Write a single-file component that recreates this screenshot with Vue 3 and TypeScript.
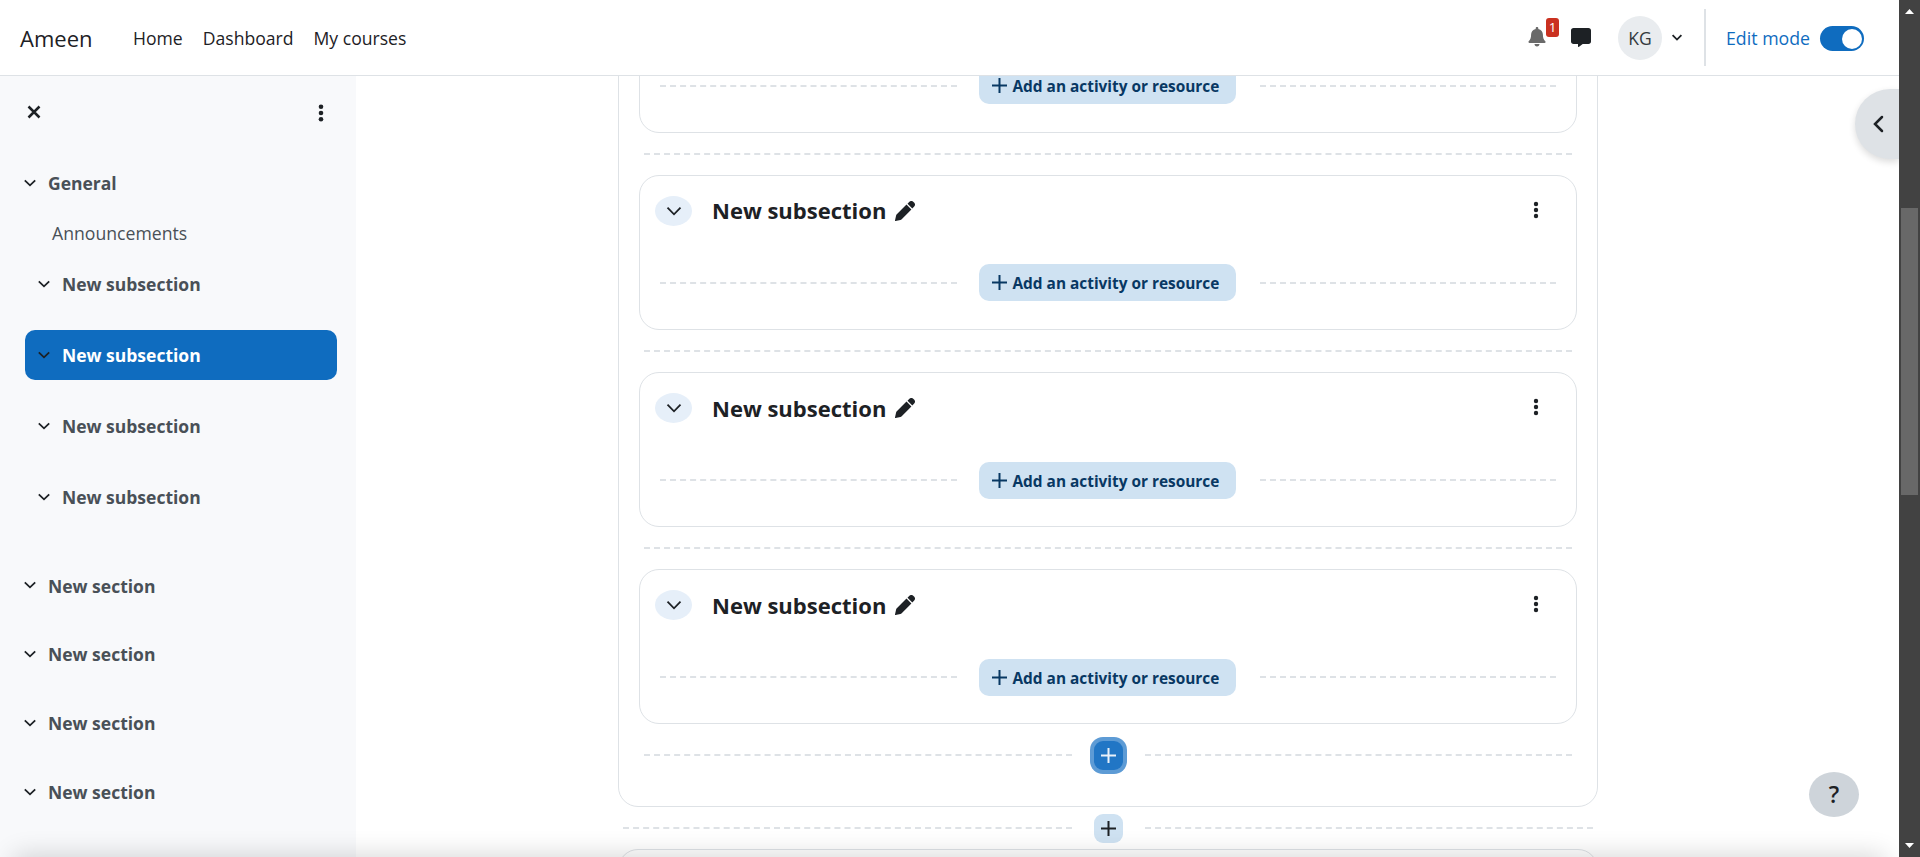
<script setup lang="ts">
interface IndexItem {
  label: string
  kind: 'section' | 'activity' | 'subsection'
  active?: boolean
}

interface Card {
  id: number
  title?: string
}

const navLinks = ['Home', 'Dashboard', 'My courses']
const general: IndexItem[] = [
  { label: 'General', kind: 'section' },
  { label: 'Announcements', kind: 'activity' },
]
const subsections: IndexItem[] = [
  { label: 'New subsection', kind: 'subsection' },
  { label: 'New subsection', kind: 'subsection', active: true },
  { label: 'New subsection', kind: 'subsection' },
  { label: 'New subsection', kind: 'subsection' },
]
const sections = ['New section', 'New section', 'New section', 'New section']
// The first card is scrolled under the navbar, so only its lower part is rendered.
const cards: Card[] = [
  { id: 1 },
  { id: 2, title: 'New subsection' },
  { id: 3, title: 'New subsection' },
  { id: 4, title: 'New subsection' },
]
</script>

<template>
  <div class="page">
    <div class="window">
      <header class="navbar">
        <span class="brand t">Ameen</span>
        <nav class="links">
          <a v-for="link in navLinks" :key="link" class="link t">{{ link }}</a>
        </nav>
        <div class="tools">
          <span class="bell">
            <svg width="18" height="20" viewBox="0 0 18 20"><path fill="#6a6a6a" d="M9 0c.8 0 1.300.5 1.300 1.200v.7c2.900.6 4.600 2.800 4.600 5.700 0 3.300.7 5.100 2.400 6.700.3.300.3.500.3.800 0 .5-.4.900-1 .9H1.400c-.6 0-1-.4-1-.9 0-.3 0-.5.3-.8 1.700-1.600 2.400-3.400 2.400-6.700 0-2.900 1.700-5.100 4.600-5.700v-.7C7.700.5 8.200 0 9 0zM6.500 17h5c0 1.400-1 2.400-2.500 2.400S6.500 18.400 6.500 17z"/></svg>
            <span class="badge">1</span>
          </span>
          <svg class="chat" width="20" height="20" viewBox="0 0 20 20"><path fill="#1d2125" d="M2.600 0h14.800C19 0 20 1 20 2.500v11c0 1.500-1 2.500-2.600 2.500h-5.700l-4 3c-.3.200-.7 0-.7-.4V16H2.600C1 16 0 15 0 13.500v-11C0 1 1 0 2.600 0z"/></svg>
          <span class="avatar"><span class="t">KG</span></span>
          <svg class="caret" width="12" height="8" viewBox="0 0 12 8"><path d="M1.600 1.200 6 5.600l4.400-4.400" /></svg>
          <span class="rule"></span>
          <span class="edit t">Edit mode</span>
          <span class="toggle"><span class="knob"></span></span>
        </div>
      </header>

      <div class="body">
        <aside class="index">
          <div class="index-head">
            <svg width="14" height="14" viewBox="0 0 14 14"><path class="cross" d="M1.500 1.500l11 11M12.500 1.500l-11 11" /></svg>
            <svg class="dots" width="6" height="18" viewBox="0 0 6 18"><circle cx="3" cy="2.800" r="2.300" /><circle cx="3" cy="9" r="2.300" /><circle cx="3" cy="15.200" r="2.300" /></svg>
          </div>
          <div v-for="item in general" :key="item.label" class="row" :class="item.kind">
            <svg v-if="item.kind === 'section'" class="caret" width="12" height="8" viewBox="0 0 12 8"><path d="M.8 1.300 6 6.300l5.200-5" /></svg>
            <span class="t">{{ item.label }}</span>
          </div>
          <div class="subs">
            <div v-for="(item, i) in subsections" :key="i" class="row subsection" :class="{ active: item.active }">
              <svg class="caret" width="12" height="8" viewBox="0 0 12 8"><path d="M.8 1.300 6 6.300l5.200-5" /></svg>
              <span class="t">{{ item.label }}</span>
            </div>
          </div>
          <div class="secs">
            <div v-for="(label, i) in sections" :key="i" class="row section">
              <svg class="caret" width="12" height="8" viewBox="0 0 12 8"><path d="M.8 1.300 6 6.300l5.200-5" /></svg>
              <span class="t">{{ label }}</span>
            </div>
          </div>
        </aside>

        <main class="content">
          <section class="outer">
            <template v-for="(card, i) in cards" :key="card.id">
              <div v-if="i > 0" class="between"><span class="dash"></span></div>
              <article class="card" :class="{ low: i > 1 }">
                <div v-if="card.title" class="card-head">
                  <span class="collapse">
                    <svg class="caret" width="16" height="12" viewBox="0 0 16 12"><path d="M1.500 2.700 8 9.300l6.500-6.600" /></svg>
                  </span>
                  <h3 class="t">{{ card.title }}</h3>
                  <svg class="pencil" width="20" height="20" viewBox="0 0 20 20"><path fill="#1d2125" d="M11.500 3.600 16.400 8.500 6.700 18.200c-.4.400-.8.500-1.300.700L.6 20c-.4.100-.7-.200-.6-.6l1.100-4.800c.2-.5.300-.9.700-1.300zM12.500 2.700 14.400.8c1.100-1.100 2.800-1.100 3.800-.1l1.100 1.100c1 1 1 2.700-.1 3.800L17.300 7.500z"/></svg>
                  <svg class="dots" width="6" height="18" viewBox="0 0 6 18"><circle cx="3" cy="3" r="2.200" /><circle cx="3" cy="9" r="2.200" /><circle cx="3" cy="15" r="2.200" /></svg>
                </div>
                <div class="add-row">
                  <span class="dash"></span>
                  <button class="add">
                    <svg width="15" height="15" viewBox="0 0 15 15"><path d="M7.500 0v15M0 7.500h15" /></svg>
                    <span class="t">Add an activity or resource</span>
                  </button>
                  <span class="dash"></span>
                </div>
              </article>
            </template>
            <div class="insert inner">
              <span class="dash"></span>
              <button class="plus focused"><svg width="15" height="15" viewBox="0 0 15 15"><path d="M7.500 0v15M0 7.500h15" /></svg></button>
              <span class="dash"></span>
            </div>
          </section>
          <div class="insert">
            <span class="dash"></span>
            <button class="plus"><svg width="15" height="15" viewBox="0 0 15 15"><path d="M7.500 0v15M0 7.500h15" /></svg></button>
            <span class="dash"></span>
          </div>
          <section class="outer next"></section>
        </main>
      </div>

      <button class="drawer"><svg width="12" height="18" viewBox="0 0 12 18"><path d="M10 2 3 9l7 7" /></svg></button>
      <button class="help">?</button>
      <div class="fade"></div>
    </div>

    <div class="scrollbar">
      <svg width="9" height="5" viewBox="0 0 9 5"><path d="M4.500 0 9 5H0z" /></svg>
      <span class="thumb"></span>
      <svg width="9" height="5" viewBox="0 0 9 5"><path d="M4.500 5 0 0h9z" /></svg>
    </div>
  </div>
</template>

<style>
body { margin: 0; overflow: hidden; }
</style>

<style scoped>
.page {
  display: flex;
  width: 1920px;
  height: 857px;
  overflow: hidden;
  color: #1d2125;
  background: #fff;
  font-family: "Open Sans", "Noto Sans", sans-serif;
  font-size: 17.500px;
}
.page * { box-sizing: border-box; }
button { border: 0; padding: 0; font-family: inherit; color: inherit; }
svg { display: block; flex: none; }
.t { white-space: nowrap; }
.window { position: relative; width: 1899px; height: 857px; overflow: hidden; display: flex; flex-direction: column; }
.navbar { flex: none; display: flex; align-items: center; height: 76px; padding-left: 20px; border-bottom: 1px solid #dee2e6; background: #fff; }
.brand { width: 113px; font-size: 22px; padding-top: 1px; }
.links { display: flex; gap: 20px; padding-top: 1px; }
.link { font-size: 17.600px; }
.tools { display: flex; align-items: center; margin-left: auto; padding-right: 35px; height: 75px; }
.bell { position: relative; margin-left: -1px; margin-right: 25px; height: 22px; }
.badge { position: absolute; left: 18px; top: -9px; width: 13px; height: 19px; border-radius: 3px; background: #ca3120; color: #fff; font-size: 13.500px; line-height: 18px; text-align: center; }
.chat { margin-right: 27px; }
.avatar { display: flex; align-items: center; justify-content: center; width: 44px; height: 44px; border-radius: 50%; background: #e9ecef; color: #343a40; margin-right: 9px; }
.caret { fill: none; stroke: #1d2125; stroke-width: 1.800; }
.rule { width: 2px; height: 57px; margin-left: 21px; background: #dee2e6; }
.edit { margin-left: 20px; width: 94px; color: #0f6cbf; font-size: 17.750px; }
.toggle { display: flex; justify-content: flex-end; align-items: center; width: 44px; height: 25px; margin-top: 2px; padding-right: 2px; border-radius: 13px; background: #0f6cbf; }
.knob { width: 20px; height: 20px; border-radius: 50%; background: #fff; }

.body { display: flex; flex: 1; min-height: 0; }
.index { width: 356px; background: #f8f9fb; padding: 29px 19px 0 25px; overflow: hidden; }
.index-head { display: flex; justify-content: space-between; padding: 0 13px 0 2px; height: 53px; }
.index-head svg:first-child { margin-top: 0; }
.index-head svg { margin-top: -1.500px; }
.cross { fill: none; stroke: #1d2125; stroke-width: 2.500; }
.dots { fill: #1d2125; }
.row { display: flex; align-items: center; height: 50px; color: #495057; font-weight: 700; border-radius: 10px; }
.row.section { gap: 12px; margin-left: -1px; }
.row.activity { padding-left: 27px; font-weight: 400; font-size: 17.650px; }
.row.subsection { gap: 12px; padding-left: 13px; }
.row.active { color: #fff; background: #0f6cbf; }
.subs { display: flex; flex-direction: column; gap: 21px; padding-top: 1px; }
.secs { display: flex; flex-direction: column; gap: 19px; padding-top: 38px; }
.secs .row:first-child .t { padding-top: 1px; }

.content { width: 980px; margin-left: 262px; display: flex; flex-direction: column; overflow: hidden; height: 781px; }
.outer { flex: none; border: 1px solid #dee2e6; border-radius: 20px; padding: 0 20px; margin-top: -99px; height: 830px; }
.card { display: flex; flex-direction: column; height: 155px; border: 1px solid #dee2e6; border-radius: 20px; padding: 20px 20px 0 15px; }
.between { display: flex; align-items: center; height: 42px; padding: 0 5px; }
.dash { flex: 1; height: 2px; border-top: 2px dashed #dee2e6; }
.card-head { display: flex; align-items: center; height: 30px; }
.collapse { display: flex; align-items: center; justify-content: center; width: 37px; height: 30px; border-radius: 50%; background: #e6eff9; }
.card-head h3 { margin: -2px 0 0 20px; width: 183px; font-size: 22px; font-weight: 700; line-height: 30px; }
.card-head .dots { margin-left: auto; margin-right: 17px; margin-top: -2px; }
.add-row { display: flex; align-items: center; height: 37px; margin-top: auto; margin-bottom: 28px; padding-left: 5px; gap: 23px; }
.add { display: flex; align-items: center; gap: 6px; width: 257px; height: 37px; margin-left: -1px; margin-right: 1px; padding-left: 13px; border-radius: 10px; background: #cfe2f2; color: #083863; font-size: 15.400px; font-weight: 700; }
.add .t { padding-top: 2px; }
.card.low h3 { margin-top: 0; }
.card.low .add { margin-top: 2px; }
.add svg, .plus svg { fill: none; stroke: currentColor; stroke-width: 2; }
.insert { display: flex; align-items: center; flex: none; height: 42px; padding: 0 5px; gap: 22px; }
.insert.inner { height: 62px; }
.plus { display: flex; align-items: center; justify-content: center; width: 29px; height: 29px; border-radius: 9px; background: #cfe2f2; }
.plus.focused { background: #2176c5; color: #e9f1fa; box-shadow: 0 0 0 4px #5d9bd5; }
.outer.next { margin-top: 0; }

.drawer { position: absolute; right: 0; top: 89px; width: 44px; height: 70px; border-radius: 35px 0 0 35px; background: #dee2e6; display: flex; align-items: center; padding-left: 17px; box-shadow: 0 3px 7px rgba(0, 0, 0, 0.14); }
.drawer svg { fill: none; stroke: #1d2125; stroke-width: 2.500; stroke-linecap: round; }
.help { position: absolute; left: 1809px; top: 772px; width: 50px; height: 45px; border-radius: 50%; background: #ced4da; font-size: 23px; font-weight: 600; line-height: 45px; }
.fade { position: absolute; left: 16px; right: 16px; top: 857px; height: 30px; box-shadow: 0 0 26px 2px rgba(0, 0, 0, 0.16); }
.scrollbar { display: flex; flex-direction: column; align-items: center; width: 21px; height: 857px; padding: 9px 0; background: #424242; }
.scrollbar svg { fill: #fff; }
.thumb { width: 17px; height: 287px; margin-top: 194px; margin-bottom: auto; background: #686868; }
</style>
